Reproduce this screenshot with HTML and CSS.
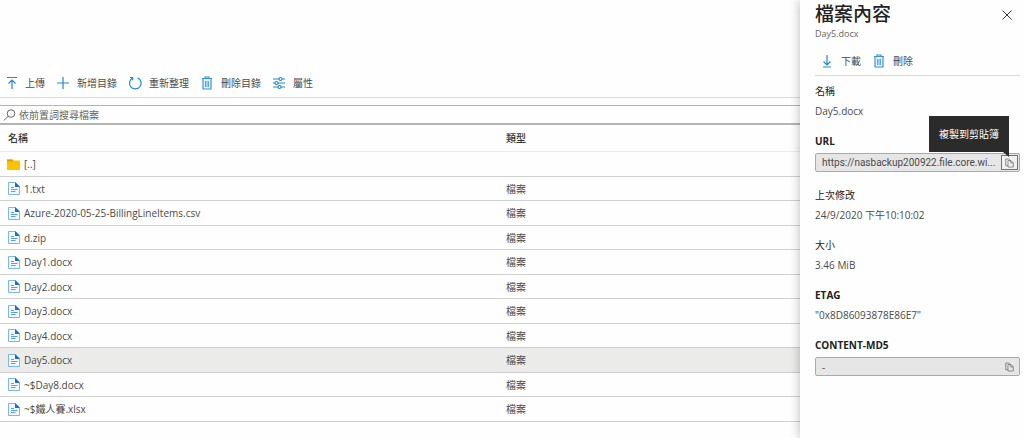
FILE: index.html
```html
<!DOCTYPE html>
<html lang="zh-Hant">
<head>
<meta charset="utf-8">
<meta name="viewport" content="width=device-width, initial-scale=1">
<title>檔案內容</title>
<link rel="stylesheet" href="styles.css">
</head>
<body>
<svg class="sprite" aria-hidden="true">
  <symbol id="doc" viewBox="0 0 12 13">
    <path d="M.5 .5h7L11.500 4.500v8H.5z" fill="#f2f8fd" stroke="#7db6e8"/>
    <path d="M7 0l5 5H7z" fill="#1a6fca"/>
    <path d="M3 5.500h3M3 7.500h6.500M3 9.500h4.500" stroke="#55a3e2" fill="none"/>
  </symbol>
  <symbol id="trash" viewBox="0 0 12 14">
    <path d="M1 2.500h10M4 2.500v-1.500h4v1.500M2 3v10h8V3" fill="#e4f1fb" stroke="#3a94d8" stroke-width="1.200"/>
    <path d="M4.500 5v6M6 5v6M7.500 5v6" fill="none" stroke="#3a94d8" stroke-width=".8"/>
  </symbol>
  <symbol id="copy" viewBox="0 0 10 10">
    <path d="M3 8H.8V.6h3.500l1.500 1.500M3.300 2.300h3.400l2.500 2.500v4.700H3.300zM6.500 2.500V5h2.500" fill="none" stroke="#666" stroke-width=".8"/>
  </symbol>
</svg>
<div class="layout">
  <main class="browser">
    <div class="toolbar">
      <button type="button" class="command"><svg class="icon" viewBox="0 0 12 14"><path d="M2 1.500h10M7 13V4M3.500 7.500L7 4l3.500 3.500"/></svg>上傳</button>
      <button type="button" class="command"><svg class="icon" viewBox="0 0 12 14"><path d="M0 7h12M6 1v12"/></svg>新增目錄</button>
      <button type="button" class="command"><svg class="icon" viewBox="0 0 12 14"><path d="M3.500 2.100A5.800 5.800 0 1 0 8.500 1.800M1 1.500h2.700v2.700"/></svg>重新整理</button>
      <button type="button" class="command"><svg class="icon"><use href="#trash"/></svg>刪除目錄</button>
      <button type="button" class="command"><svg class="icon" viewBox="0 0 12 14"><path d="M0 3h6M9 3h3M0 7h2M5 7h7M0 11h5M8 11h4"/><circle cx="7.500" cy="3" r="1.500"/><circle cx="3.500" cy="7" r="1.500"/><circle cx="6.500" cy="11" r="1.500"/></svg>屬性</button>
    </div>
    <label class="search">
      <svg class="search-icon" viewBox="0 0 13 12"><circle cx="8" cy="4.500" r="3.800"/><path d="M5.200 7.200L.8 11.500"/></svg>
      <input type="text" placeholder="依前置詞搜尋檔案" aria-label="依前置詞搜尋檔案">
    </label>
    <table class="files">
      <thead><tr><th class="name-col" scope="col">名稱</th><th scope="col">類型</th></tr></thead>
      <tbody>
        <tr><td><span class="file"><svg class="folder" viewBox="0 0 13 11"><path d="M0 .5h5.500l1 1H13V11H0z" fill="#fcc400"/><path d="M0 .5h5.500l1 1-1 1H0z" fill="#dda000"/></svg>[..]</span></td><td></td></tr>
        <tr><td><span class="file"><svg class="doc"><use href="#doc"/></svg>1.txt</span></td><td>檔案</td></tr>
        <tr><td><span class="file"><svg class="doc"><use href="#doc"/></svg>Azure-2020-05-25-BillingLineItems.csv</span></td><td>檔案</td></tr>
        <tr><td><span class="file"><svg class="doc"><use href="#doc"/></svg>d.zip</span></td><td>檔案</td></tr>
        <tr><td><span class="file"><svg class="doc"><use href="#doc"/></svg>Day1.docx</span></td><td>檔案</td></tr>
        <tr><td><span class="file"><svg class="doc"><use href="#doc"/></svg>Day2.docx</span></td><td>檔案</td></tr>
        <tr><td><span class="file"><svg class="doc"><use href="#doc"/></svg>Day3.docx</span></td><td>檔案</td></tr>
        <tr><td><span class="file"><svg class="doc"><use href="#doc"/></svg>Day4.docx</span></td><td>檔案</td></tr>
        <tr class="selected"><td><span class="file"><svg class="doc"><use href="#doc"/></svg>Day5.docx</span></td><td>檔案</td></tr>
        <tr><td><span class="file"><svg class="doc"><use href="#doc"/></svg>~$Day8.docx</span></td><td>檔案</td></tr>
        <tr><td><span class="file"><svg class="doc"><use href="#doc"/></svg>~$鐵人賽.xlsx</span></td><td>檔案</td></tr>
      </tbody>
    </table>
  </main>
  <aside class="panel">
    <header class="panel-head">
      <div>
        <h1>檔案內容</h1>
        <p class="subtitle">Day5.docx</p>
      </div>
      <button type="button" class="close" aria-label="關閉"><svg viewBox="0 0 10 10"><path d="M.5.5l9 9M9.500.5l-9 9"/></svg></button>
    </header>
    <div class="panel-tools">
      <button type="button" class="command"><svg class="icon" viewBox="0 0 12 14"><path d="M6 1v10M2.500 7.500L6 11l3.500-3.500M2 13h8"/></svg>下載</button>
      <button type="button" class="command"><svg class="icon"><use href="#trash"/></svg>刪除</button>
    </div>
    <section class="field"><h2 class="label">名稱</h2><p class="value">Day5.docx</p></section>
    <section class="field">
      <label class="label strong" for="url">URL</label>
      <div class="copybox">
        <input id="url" class="url" type="text" readonly value="https://nasbackup200922.file.core.wi...">
        <button type="button" class="copy focused" aria-label="複製"><svg><use href="#copy"/></svg></button>
        <div class="tooltip" role="tooltip">複製到剪貼簿</div>
      </div>
    </section>
    <section class="field"><h2 class="label">上次修改</h2><p class="value">24/9/2020 下午10:10:02</p></section>
    <section class="field"><h2 class="label">大小</h2><p class="value">3.46 MiB</p></section>
    <section class="field"><h2 class="label strong">ETAG</h2><p class="value">"0x8D86093878E86E7"</p></section>
    <section class="field">
      <label class="label strong" for="md5">CONTENT-MD5</label>
      <div class="copybox">
        <input id="md5" type="text" readonly value="-">
        <button type="button" class="copy" aria-label="複製"><svg><use href="#copy"/></svg></button>
      </div>
    </section>
  </aside>
</div>
</body>
</html>
```
FILE: styles.css
```css
* { box-sizing: border-box; }
body {
  margin: 0;
  background: #fefefe;
  color: #4a4a4a;
  font: 10px/16px "Open Sans", "Noto Sans CJK TC", sans-serif;
}
h1, h2, p { margin: 0; font-weight: 400; }
button, input { font: inherit; color: inherit; }
button { padding: 0; border: 0; background: none; cursor: pointer; }
input { min-width: 0; border: 0; padding: 0; background: none; outline: 0; }
svg { display: block; flex: none; }
.sprite { position: absolute; width: 0; height: 0; }

.layout { display: flex; min-height: 100vh; }
.browser { flex: 1; min-width: 0; }

.toolbar {
  display: flex;
  gap: 12px;
  padding: 75px 5px 6px;
  border-bottom: 1px solid #dadada;
}
.command { display: flex; align-items: center; gap: 8px; white-space: nowrap; }
.icon { width: 12px; height: 14px; overflow: visible; fill: none; stroke: #2487d0; stroke-width: 1.2; }

.search {
  display: flex;
  align-items: center;
  gap: 3px;
  height: 20px;
  margin-top: 7px;
  padding-left: 3px;
  border: solid #b4b4b4;
  border-width: 1px 0 2px;
}
.search input { flex: 1; }
.search input::placeholder { color: #666; opacity: 1; }
.search-icon { width: 13px; height: 12px; fill: none; stroke: #666; }

.files { width: 100%; border-collapse: separate; border-spacing: 0; table-layout: fixed; font-size: 10px; }
.files th, .files td {
  height: 24px;
  padding: 0 8px;
  border-bottom: 1px solid #d0d0d0;
  text-align: left;
  line-height: 16px;
}
.files th { height: 27px; border-color: #ececec; font-weight: 500; color: #333; }
.files tbody tr:nth-child(odd) td { height: 25px; }
.name-col { width: 62.25%; }
.file { display: flex; align-items: center; gap: 4px; }
.doc { width: 12px; height: 13px; }
.folder { width: 13px; height: 11px; margin-left: -1px; }
.selected { background: #ebebea; }

.panel {
  position: relative;
  width: 224px;
  padding: 2px 4px 0 15px;
  background: #fefefe;
  box-shadow: 0 0 10px rgba(0, 0, 0, .28);
}
.panel-head { display: flex; justify-content: space-between; }
h1 { font-size: 19px; line-height: 24px; font-weight: 500; color: #222; }
.subtitle { font-size: 9px; line-height: 16px; color: #666; }
.close { align-self: flex-start; margin: 8px 8px 0 0; }
.close svg { width: 10px; height: 10px; fill: none; stroke: #333; }
.panel-tools {
  display: flex;
  gap: 12px;
  padding: 11px 6px 6px;
  border-bottom: 1px solid #dadada;
}
.field { margin-bottom: 14px; }
.panel-tools + .field { margin-top: 7px; }
.label { display: block; font-size: 10px; line-height: 16px; font-weight: 400; color: #222; }
.strong { font-weight: 700; }
.value { margin-top: 4px; line-height: 16px; }
.copybox {
  position: relative;
  display: flex;
  align-items: center;
  height: 19px;
  margin: 4px 0 15px;
  padding: 0 1px 0 6px;
  border: 1px solid #aaa;
  border-radius: 2px;
  background: #e6e6e6;
}
.copybox input { flex: 1; text-overflow: ellipsis; }
.copybox .url { font-family: Roboto, sans-serif; }
.copy { display: grid; place-items: center; width: 17px; height: 15px; border: 1px solid transparent; }
.copy svg { width: 9px; height: 10px; }
.focused { border-color: #2487d0; background: #f0f0f0; }
.tooltip {
  position: absolute;
  right: 10px;
  bottom: 19px;
  padding: 10px;
  background: #2b2b2b;
  color: #fff;
  white-space: nowrap;
}
.tooltip::after {
  content: "";
  position: absolute;
  right: 0;
  top: 100%;
  border: solid transparent;
  border-width: 5px 0 0 6px;
  border-top-color: #2b2b2b;
}
```
